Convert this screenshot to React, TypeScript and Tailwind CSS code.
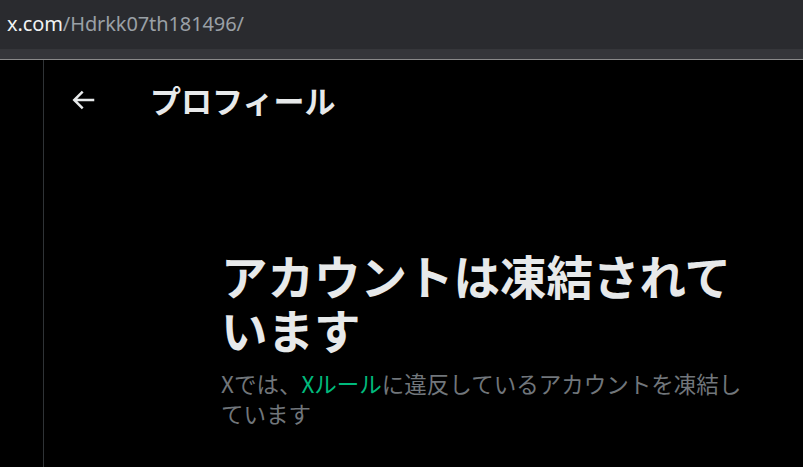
import React from "react";

export default function App() {
  return (
    <div className="w-[803px] h-[467px] overflow-hidden bg-black flex flex-col">
      <div className="h-[49px] shrink-0 bg-[#2a2b2f] flex items-center pl-[7px] pb-[2px]">
        <span className="text-[20px] tracking-[-0.1px] font-['Noto_Sans','Open_Sans',sans-serif] leading-none">
          <span className="text-[#f1f3f4]">x.com</span>
          <span className="text-[#9aa0a6]">/Hdrkk07th181496/</span>
        </span>
      </div>
      <div className="h-[10px] shrink-0 bg-[#35363a]" />
      <div className="h-[1px] shrink-0 bg-[#8a8a8a]" />
      <div className="flex-1 flex min-h-0">
        <div className="w-[43px] shrink-0" />
        <div className="flex-1 border-l border-[#2f3336] flex flex-col font-['Noto_Sans_CJK_JP','Noto_Sans',sans-serif]">
          <div className="h-[80px] shrink-0 flex items-center px-[24px]">
            <div className="w-[82px] shrink-0 flex items-center">
              <svg viewBox="0 0 24 24" className="w-[30px] h-[30px] fill-[#e7e9ea]">
                <path d="M7.414 13l5.043 5.04-1.414 1.42L3.586 12l7.457-7.46 1.414 1.42L7.414 11H21v2H7.414z" />
              </svg>
            </div>
            <h2 className="text-[31px] font-bold text-[#e7e9ea] leading-[36px]">プロフィール</h2>
          </div>
          <div className="pl-[177px] pt-[108px]">
            <div className="w-[530px]">
              <h1 className="text-[46.5px] font-bold text-[#e7e9ea] leading-[54px]">
                アカウントは凍結されています
              </h1>
              <p className="mt-[12px] text-[22.5px] text-[#71767b] leading-[30px]">
                Xでは、<span className="text-[#00ba7c]">Xルール</span>に違反しているアカウントを凍結しています
              </p>
            </div>
          </div>
        </div>
      </div>
    </div>
  );
}
